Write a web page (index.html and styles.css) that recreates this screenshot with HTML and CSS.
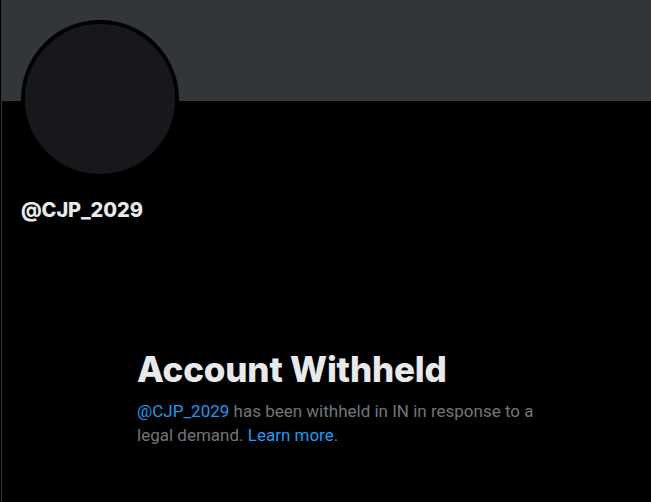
FILE: index.html
```html
<!DOCTYPE html>
<html>
<head>
<meta charset="utf-8">
<link rel="stylesheet" href="styles.css">
</head>
<body>
<div class="column">
  <div class="banner"></div>
  <div class="profile">
    <div class="avatar"></div>
    <div class="handle">@CJP_2029</div>
  </div>
  <div class="empty">
    <h1 class="title">Account Withheld</h1>
    <p class="desc"><a class="link">@CJP_2029</a> has been withheld in IN in response to a legal demand. <a class="link">Learn more</a>.</p>
  </div>
</div>
</body>
</html>
```
FILE: styles.css
```css
html, body {
  margin: 0;
  padding: 0;
  background: #000;
  height: 100%;
}
body {
  font-family: "Inter", "Liberation Sans", sans-serif;
  color: #e7e9ea;
}
.column {
  margin-left: 1px;
  border-left: 1px solid #2f3336;
  min-height: 100%;
  box-sizing: border-box;
}
.banner {
  height: 101px;
  background: #333639;
}
.profile {
  padding: 0 0 0 19px;
  margin-top: -81px;
  position: relative;
}
.avatar {
  width: 150px;
  height: 150px;
  border: 4px solid #000;
  border-radius: 50%;
  background: #16181c;
}
.handle {
  margin-top: 20px;
  font-size: 20px;
  font-weight: 800;
  line-height: 24px;
  letter-spacing: -0.1px;
}
.empty {
  margin: 127px 0 0 135px;
  width: 410px;
}
.title {
  margin: 0;
  font-size: 35px;
  font-weight: 800;
  line-height: 40px;
  letter-spacing: -0.2px;
}
.desc {
  margin: 10px 0 0;
  font-family: "Roboto", "Liberation Sans", sans-serif;
  font-size: 17px;
  line-height: 24px;
  color: #71767b;
}
.link {
  color: #1d9bf0;
}
```
